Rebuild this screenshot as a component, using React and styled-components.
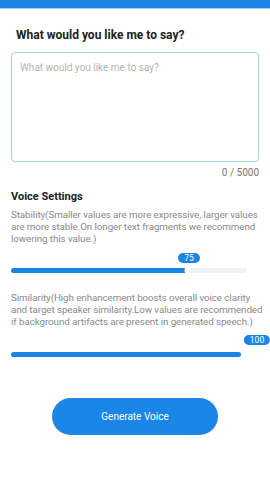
import React from 'react';
import styled, { createGlobalStyle } from 'styled-components';

const GlobalStyle = createGlobalStyle`
  html, body {
    margin: 0;
    padding: 0;
    background: #ffffff;
    font-family: Roboto, "Liberation Sans", sans-serif;
  }
`;

const Page = styled.div`
  width: 270px;
  height: 480px;
  overflow: hidden;
  background: #fff;
`;

const TopBar = styled.div`
  height: 8px;
  background: #1b85e6;
  border-bottom: 1px solid #a6d0f6;
`;

const Content = styled.div`
  padding: 0 11px;
  display: flex;
  flex-direction: column;
`;

const Title = styled.h1`
  margin: 19px 0 0 5px;
  font-size: 12px;
  line-height: 14px;
  font-weight: 700;
  color: #222;
`;

const TextBox = styled.div`
  margin-top: 10px;
  height: 110px;
  box-sizing: border-box;
  border: 1px solid #a9cbec;
  border-radius: 4px;
  padding: 9px 8px;
  font-size: 10px;
  color: #b4b4b4;
`;

const Counter = styled.div`
  margin-top: 5px;
  text-align: right;
  font-size: 10px;
  line-height: 12px;
  color: #777;
`;

const SectionTitle = styled.h2`
  margin: 11px 0 0;
  font-size: 11px;
  line-height: 14px;
  font-weight: 700;
  color: #222;
`;

const Hint = styled.p`
  margin: ${(p) => p.$top}px -8px 0 0;
  font-size: 9.8px;
  line-height: 12px;
  letter-spacing: -0.08px;
  color: #8a8a8a;
`;

const SliderWrap = styled.div`
  position: relative;
  margin-top: ${(p) => p.$top}px;
  height: 5px;
  width: ${(p) => p.$width}px;
  border-radius: 3px;
  background: #eef3f8;
`;

const Fill = styled.div`
  height: 100%;
  border-radius: 3px;
  background: #1b85e6;
`;

const Badge = styled.span`
  position: absolute;
  bottom: ${(p) => p.$lift}px;
  transform: translateX(-50%);
  min-width: 22px;
  padding: 0 6px;
  box-sizing: border-box;
  height: 10px;
  border-radius: 5px;
  background: #1b85e6;
  color: #fff;
  font-size: 8.5px;
  line-height: 10px;
  text-align: center;
`;

const Thumb = styled.span`
  position: absolute;
  top: -1px;
  width: 7px;
  height: 7px;
  border-radius: 50%;
  background: #fff;
  transform: translateX(-50%);
  box-shadow: 0 0 1px rgba(0, 0, 0, 0.1);
`;

const ButtonRow = styled.div`
  display: flex;
  justify-content: center;
  margin-top: 41px;
`;

const Button = styled.button`
  width: 166px;
  height: 37px;
  border: none;
  border-radius: 19px;
  background: #1b86e8;
  color: #fff;
  font-family: Roboto, "Liberation Sans", sans-serif;
  font-size: 10px;
`;

function Slider({ value, width, badgeX, top, lift }) {
  return (
    <SliderWrap $width={width} $top={top}>
      <Fill style={{ width: `${value}%` }} />
      {value < 100 && <Thumb style={{ left: `${value}%` }} />}
      <Badge $lift={lift} style={{ left: badgeX }}>{value}</Badge>
    </SliderWrap>
  );
}

export default function App() {
  return (
    <Page>
      <GlobalStyle />
      <TopBar />
      <Content>
        <Title>What would you like me to say?</Title>
        <TextBox>What would you like me to say?</TextBox>
        <Counter>0 / 5000</Counter>

        <SectionTitle>Voice Settings</SectionTitle>
        <Hint $top={5}>
          Stability(Smaller values are more expressive, larger values are more stable.On longer text fragments we recommend lowering this value.)
        </Hint>
        <Slider value={75} width={236} badgeX={178} top={23} lift={10} />

        <Hint $top={19}>
          Similarity(High enhancement boosts overall voice clarity and target speaker similarity.Low values are recommended if background artifacts are present in generated speech.)
        </Hint>
        <Slider value={100} width={230} badgeX={246} top={24} lift={12} />

        <ButtonRow>
          <Button>Generate Voice</Button>
        </ButtonRow>
      </Content>
    </Page>
  );
}
